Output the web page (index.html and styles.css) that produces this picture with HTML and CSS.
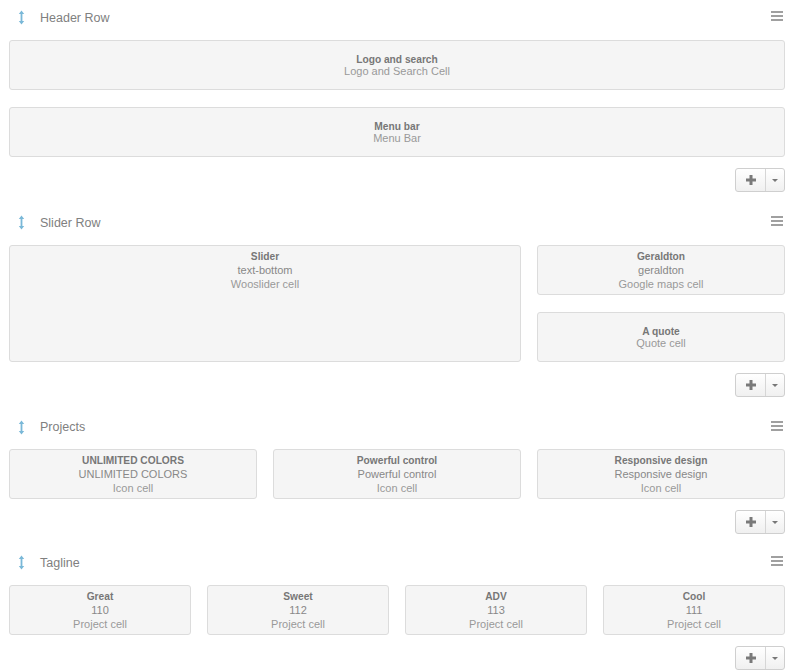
FILE: index.html
```html
<!DOCTYPE html>
<html>
<head>
<meta charset="utf-8">
<link rel="stylesheet" href="styles.css">
</head>
<body>
<div class="page">

  <section class="row row-a">
    <div class="row-head">
      <svg class="move" width="7" height="15" viewBox="0 0 7 15"><path d="M3.5 0.5 L6.2 4 L4.4 4 L4.4 11 L6.2 11 L3.5 14.5 L0.8 11 L2.6 11 L2.6 4 L0.8 4 Z" fill="#7ab8d8"/></svg>
      <span class="row-title">Header Row</span>
      <span class="menu"><i></i><i></i><i></i></span>
    </div>
    <div class="cells cols-1">
      <div class="cell two"><b>Logo and search</b><span class="type">Logo and Search Cell</span></div>
      <div class="cell two"><b>Menu bar</b><span class="type">Menu Bar</span></div>
    </div>
    <div class="actions"><div class="btn"><span class="plus"></span><span class="caret"></span></div></div>
  </section>

  <section class="row row-b">
    <div class="row-head">
      <svg class="move" width="7" height="15" viewBox="0 0 7 15"><path d="M3.5 0.5 L6.2 4 L4.4 4 L4.4 11 L6.2 11 L3.5 14.5 L0.8 11 L2.6 11 L2.6 4 L0.8 4 Z" fill="#7ab8d8"/></svg>
      <span class="row-title">Slider Row</span>
      <span class="menu"><i></i><i></i><i></i></span>
    </div>
    <div class="cells cols-3">
      <div class="cell three top span2"><b>Slider</b><span class="sub">text-bottom</span><span class="type">Wooslider cell</span></div>
      <div class="cell three"><b>Geraldton</b><span class="sub">geraldton</span><span class="type">Google maps cell</span></div>
      <div class="cell two col3"><b>A quote</b><span class="type">Quote cell</span></div>
    </div>
    <div class="actions"><div class="btn"><span class="plus"></span><span class="caret"></span></div></div>
  </section>

  <section class="row row-c">
    <div class="row-head">
      <svg class="move" width="7" height="15" viewBox="0 0 7 15"><path d="M3.5 0.5 L6.2 4 L4.4 4 L4.4 11 L6.2 11 L3.5 14.5 L0.8 11 L2.6 11 L2.6 4 L0.8 4 Z" fill="#7ab8d8"/></svg>
      <span class="row-title">Projects</span>
      <span class="menu"><i></i><i></i><i></i></span>
    </div>
    <div class="cells cols-3">
      <div class="cell three"><b>UNLIMITED COLORS</b><span class="sub">UNLIMITED COLORS</span><span class="type">Icon cell</span></div>
      <div class="cell three"><b>Powerful control</b><span class="sub">Powerful control</span><span class="type">Icon cell</span></div>
      <div class="cell three"><b>Responsive design</b><span class="sub">Responsive design</span><span class="type">Icon cell</span></div>
    </div>
    <div class="actions"><div class="btn"><span class="plus"></span><span class="caret"></span></div></div>
  </section>

  <section class="row">
    <div class="row-head">
      <svg class="move" width="7" height="15" viewBox="0 0 7 15"><path d="M3.5 0.5 L6.2 4 L4.4 4 L4.4 11 L6.2 11 L3.5 14.5 L0.8 11 L2.6 11 L2.6 4 L0.8 4 Z" fill="#7ab8d8"/></svg>
      <span class="row-title">Tagline</span>
      <span class="menu"><i></i><i></i><i></i></span>
    </div>
    <div class="cells cols-4">
      <div class="cell three"><b>Great</b><span class="sub">110</span><span class="type">Project cell</span></div>
      <div class="cell three"><b>Sweet</b><span class="sub">112</span><span class="type">Project cell</span></div>
      <div class="cell three"><b>ADV</b><span class="sub">113</span><span class="type">Project cell</span></div>
      <div class="cell three"><b>Cool</b><span class="sub">111</span><span class="type">Project cell</span></div>
    </div>
    <div class="actions"><div class="btn"><span class="plus"></span><span class="caret"></span></div></div>
  </section>

</div>
</body>
</html>
```

FILE: styles.css
```css
html, body {
  margin: 0;
  padding: 0;
  background: #fff;
}
body {
  font-family: "Liberation Sans", Arial, sans-serif;
}
.page {
  padding: 0 5px 0 9px;
}
.row-a {
  margin-bottom: 13px;
}
.row-b {
  margin-bottom: 12px;
}
.row-c {
  margin-bottom: 11px;
}
.row-head {
  height: 35px;
  display: flex;
  align-items: center;
  margin-bottom: 5px;
}
.row-c .row-head {
  height: 36px;
  margin-bottom: 4px;
}
.move {
  display: block;
  margin-left: 9px;
}
.row-title {
  margin-left: 15px;
  font-size: 12.5px;
  color: #808080;
}
.menu {
  margin-left: auto;
  margin-right: 2px;
  width: 12px;
  display: flex;
  flex-direction: column;
  gap: 2px;
  margin-top: -3px;
}
.menu i {
  display: block;
  height: 2px;
  background: #a0a0a0;
}
.cells {
  display: grid;
  gap: 17px 16px;
}
.cols-1 { grid-template-columns: 1fr; }
.cols-3 { grid-template-columns: repeat(3, 1fr); }
.cols-4 { grid-template-columns: repeat(4, 1fr); }
.span2 { grid-column: span 2; grid-row: span 2; }
.col3 { grid-column: 3; }
.cell {
  box-sizing: border-box;
  height: 50px;
  background: #f5f5f5;
  border: 1px solid #dcdcdc;
  border-radius: 3px;
  display: flex;
  flex-direction: column;
  justify-content: center;
  align-items: center;
  font-size: 11px;
  text-align: center;
}
.cell.span2 {
  height: auto;
}
.cell.top {
  justify-content: flex-start;
  padding-top: 3px;
}
.cell b {
  color: #777;
  font-weight: bold;
  font-size: 10.2px;
  padding-top: 2px;
}
.cell .sub {
  color: #888;
}
.cell .type {
  color: #999;
}
.cell.two span {
  line-height: 12px;
}
.cell.two b {
  line-height: 10px;
}
.cell.three span {
  line-height: 14px;
}
.cell.three b {
  line-height: 12px;
}
.actions {
  display: flex;
  justify-content: flex-end;
  margin-top: 11px;
}
.btn {
  box-sizing: border-box;
  width: 50px;
  height: 24px;
  border: 1px solid #cfcfcf;
  border-radius: 3px;
  background: linear-gradient(#ffffff, #f0f0f0);
  display: flex;
}
.plus {
  width: 29px;
  border-right: 1px solid #d6d6d6;
  position: relative;
}
.plus::before, .plus::after {
  content: "";
  position: absolute;
  background: #7a7a7a;
  left: 50%;
  top: 50%;
}
.plus::before {
  width: 10px;
  height: 3px;
  transform: translate(-50%, -50%);
}
.plus::after {
  width: 3px;
  height: 10px;
  transform: translate(-50%, -50%);
}
.caret {
  flex: 1;
  display: flex;
  align-items: center;
  justify-content: center;
}
.caret::before {
  content: "";
  border-left: 3px solid transparent;
  border-right: 3px solid transparent;
  border-top: 3px solid #777;
}
```
